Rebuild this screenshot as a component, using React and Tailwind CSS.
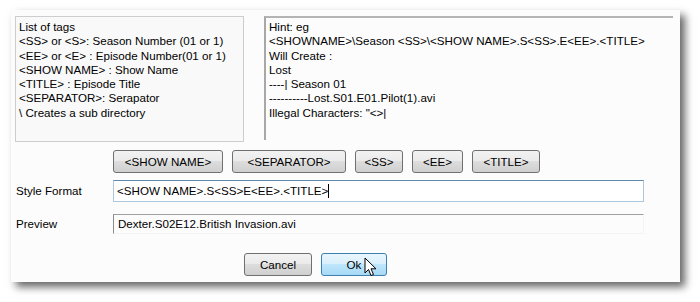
import React from "react";

const font = { fontFamily: '"Liberation Sans", Arial, sans-serif' };

function Btn({ children, w, primary }) {
  return (
    <div
      className={
        "h-[23px] flex items-center justify-center rounded-[3px] border text-[11.6px] text-black " +
        (primary
          ? "border-[#3c7fb1] bg-[linear-gradient(to_bottom,#eaf6fd_0%,#d9f0fc_45%,#bee6fd_50%,#a7d9f5_100%)]"
          : "border-[#707070] bg-[linear-gradient(to_bottom,#f2f2f2_0%,#ebebeb_45%,#dddddd_50%,#cfcfcf_100%)]")
      }
      style={{ width: w }}
    >
      {children}
    </div>
  );
}

export default function App() {
  return (
    <div className="w-[700px] h-[302px] bg-white overflow-hidden" style={font}>
      <div className="relative ml-[11px] mt-[10px] w-[669px] h-[272px] bg-[#fcfcfc] shadow-[5px_5px_8px_rgba(0,0,0,0.6)] text-[11.6px] text-black">
        {/* text boxes */}
        <div className="flex pt-[6px] pl-[4px] gap-[20px]">
          <div className="w-[229px] h-[126px] border border-[#cdcdcd] bg-[#f9f9f9] px-[3px] pt-[3px] leading-[14.3px] whitespace-pre">
            <div>List of tags</div>
            <div>{"<SS> or <S>: Season Number (01 or 1)"}</div>
            <div>{"<EE> or <E> : Episode Number(01 or 1)"}</div>
            <div>{"<SHOW NAME> : Show Name"}</div>
            <div>{"<TITLE> : Episode Title"}</div>
            <div>{"<SEPARATOR>: Serapator"}</div>
            <div>{"\\ Creates a sub directory"}</div>
          </div>
          <div className="w-[409px] h-[124px] border-t-2 border-l-2 border-t-[#b4b4b4] border-l-[#a8a8a8] px-[3px] pt-[2px] leading-[14.3px] whitespace-pre">
            <div>Hint: eg</div>
            <div>{"<SHOWNAME>\\Season <SS>\\<SHOW NAME>.S<SS>.E<EE>.<TITLE>"}</div>
            <div>Will Create :</div>
            <div>Lost</div>
            <div>{"----| Season 01"}</div>
            <div>{"----------Lost.S01.E01.Pilot(1).avi"}</div>
            <div>{'Illegal Characters: "<>|'}</div>
          </div>
        </div>

        {/* tag buttons */}
        <div className="flex mt-[8px] ml-[102px] gap-[9px]">
          <Btn w={110}>{"<SHOW NAME>"}</Btn>
          <Btn w={114}>{"<SEPARATOR>"}</Btn>
          <Btn w={48}>{"<SS>"}</Btn>
          <Btn w={51}>{"<EE>"}</Btn>
          <Btn w={68}>{"<TITLE>"}</Btn>
        </div>

        {/* style format */}
        <div className="flex items-center mt-[7px]">
          <div className="w-[102px] pl-[5px]">Style Format</div>
          <div className="w-[531px] h-[22px] flex items-center border border-[#abc6dd] border-t-[#5d8ab0] bg-white pl-[3px]">
            <span>{"<SHOW NAME>.S<SS>E<EE>.<TITLE>"}</span>
            <span className="w-[1px] h-[14px] bg-black"></span>
          </div>
        </div>

        {/* preview */}
        <div className="flex items-center mt-[12px]">
          <div className="w-[102px] pl-[5px]">Preview</div>
          <div className="w-[531px] h-[20px] flex items-center border-t border-l border-t-[#a0a0a0] border-l-[#8c8c8c] border-r border-b border-r-[#f4f4f4] border-b-[#f4f4f4] pl-[4px]">
            Dexter.S02E12.British Invasion.avi
          </div>
        </div>

        {/* ok / cancel */}
        <div className="flex mt-[19px] ml-[233px] gap-[9px]">
          <Btn w={68}>Cancel</Btn>
          <Btn w={66} primary>Ok</Btn>
        </div>

        {/* mouse cursor */}
        <svg className="absolute left-[353px] top-[247px]" width="14" height="20" viewBox="0 0 14 20">
          <path d="M1 1 L1 16 L4.5 12.5 L7 18.5 L9.5 17.5 L7 11.8 L12 11.8 Z" fill="white" stroke="black" strokeWidth="1" strokeLinejoin="round" />
        </svg>
      </div>
    </div>
  );
}
